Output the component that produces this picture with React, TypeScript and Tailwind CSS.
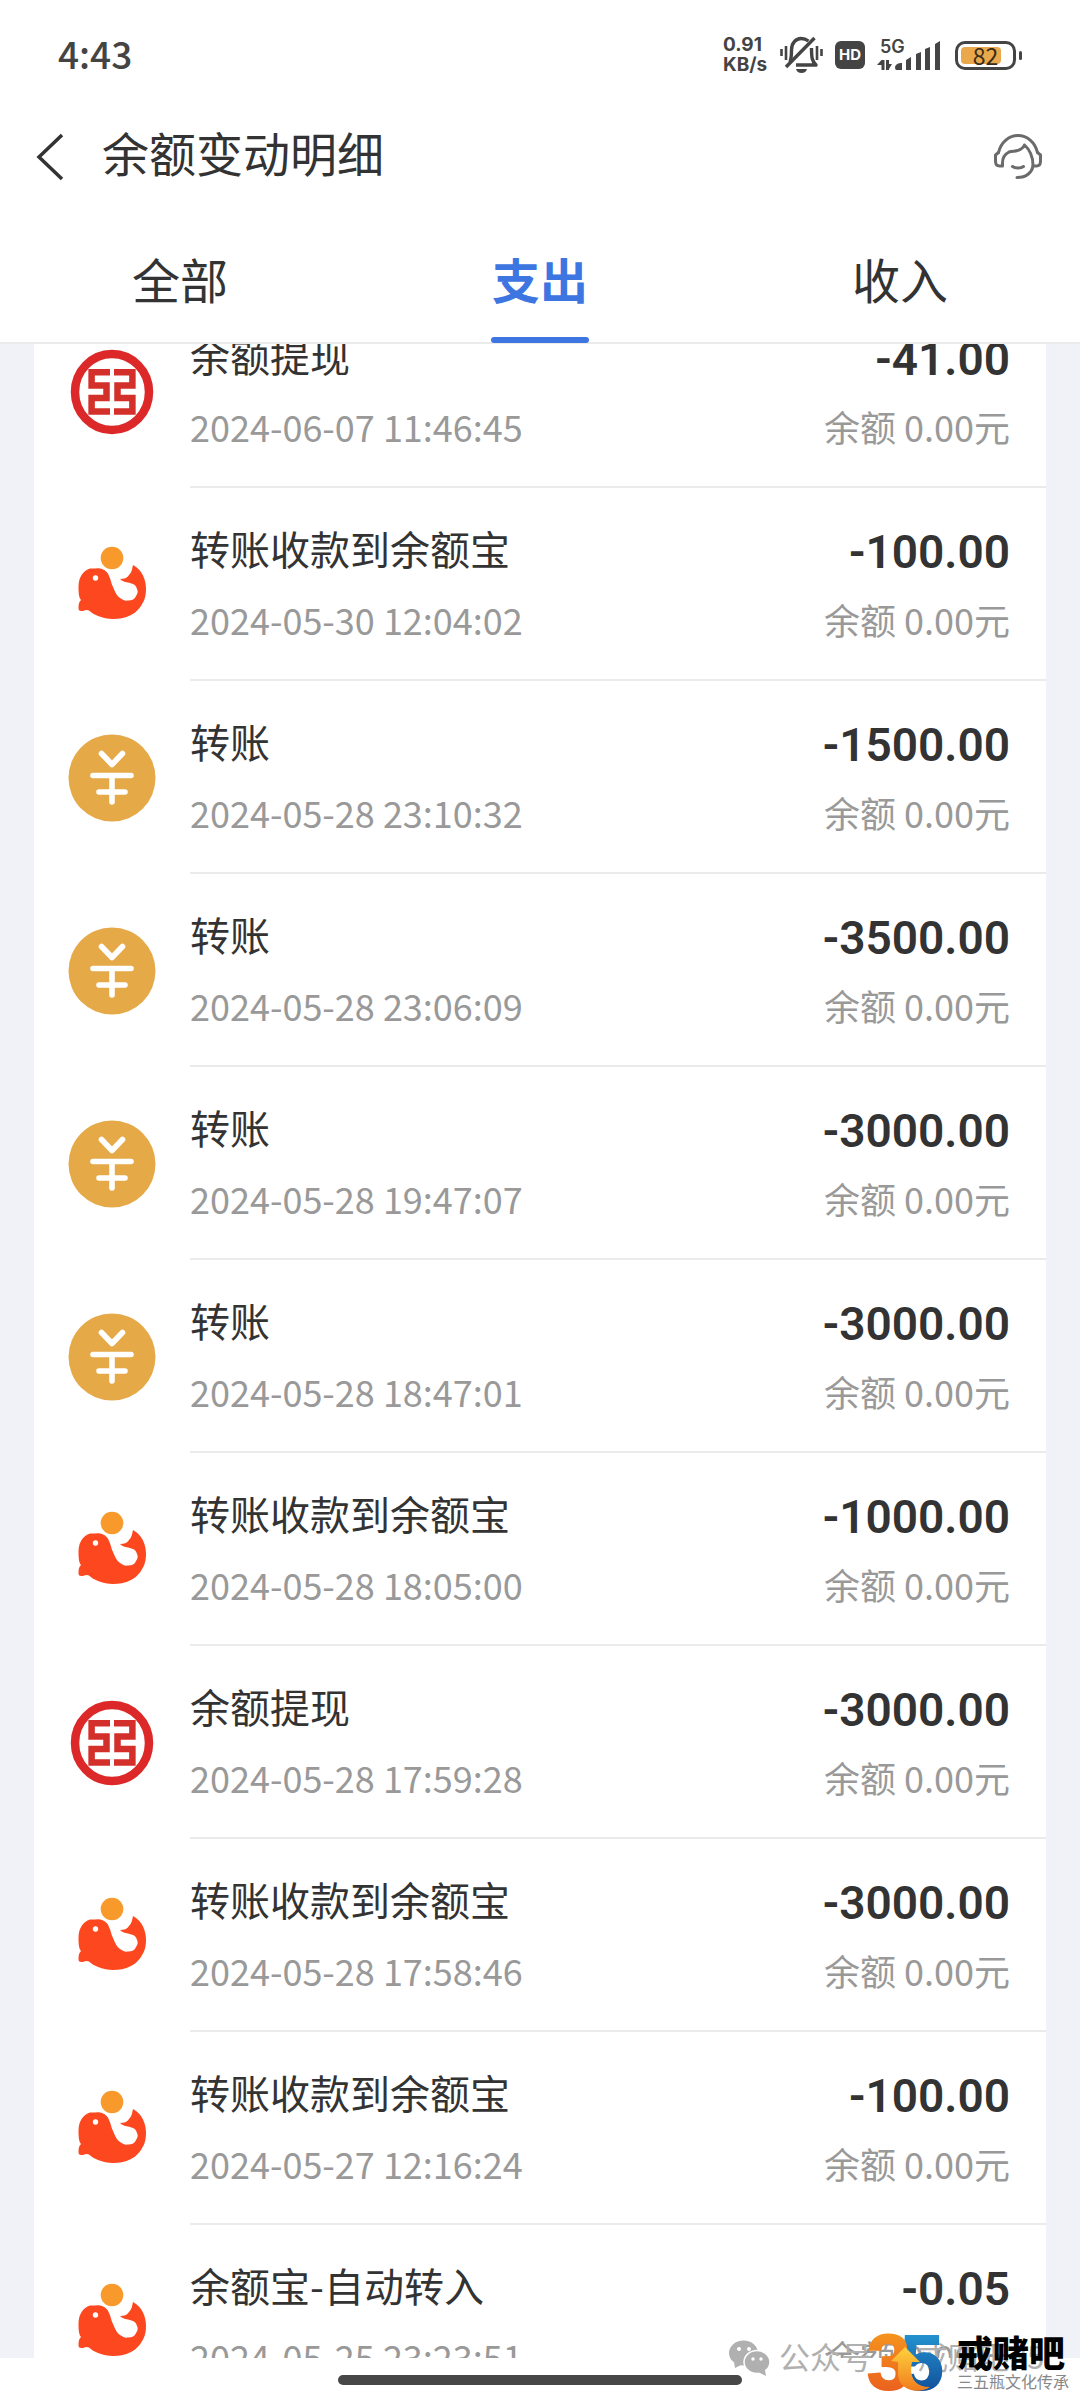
import type { ReactNode } from 'react'

type IconName = 'bank' | 'whale' | 'coin'

interface Entry {
  icon: IconName
  title: string
  time: string
  amount: string
}

const entries: Entry[] = [
  { icon: 'bank', title: '余额提现', time: '2024-06-07 11:46:45', amount: '-41.00' },
  { icon: 'whale', title: '转账收款到余额宝', time: '2024-05-30 12:04:02', amount: '-100.00' },
  { icon: 'coin', title: '转账', time: '2024-05-28 23:10:32', amount: '-1500.00' },
  { icon: 'coin', title: '转账', time: '2024-05-28 23:06:09', amount: '-3500.00' },
  { icon: 'coin', title: '转账', time: '2024-05-28 19:47:07', amount: '-3000.00' },
  { icon: 'coin', title: '转账', time: '2024-05-28 18:47:01', amount: '-3000.00' },
  { icon: 'whale', title: '转账收款到余额宝', time: '2024-05-28 18:05:00', amount: '-1000.00' },
  { icon: 'bank', title: '余额提现', time: '2024-05-28 17:59:28', amount: '-3000.00' },
  { icon: 'whale', title: '转账收款到余额宝', time: '2024-05-28 17:58:46', amount: '-3000.00' },
  { icon: 'whale', title: '转账收款到余额宝', time: '2024-05-27 12:16:24', amount: '-100.00' },
  { icon: 'whale', title: '余额宝-自动转入', time: '2024-05-25 23:23:51', amount: '-0.05' },
]

const tabs = ['全部', '支出', '收入']

function BankIcon() {
  return (
    <svg viewBox="0 0 88 88" className="size-22" aria-hidden="true">
      <ellipse cx="44" cy="44" rx="37" ry="38" fill="none" stroke="#dc2828" strokeWidth="8.5" />
      <g fill="none" stroke="#d3302b" strokeWidth="6.5">
        <path d="M42 24.3H23.6V37.5H38.5V50H23.6V63.5H42" />
        <path d="M46 24.3H64.4V37.5H49.5V50H64.4V63.5H46" />
      </g>
    </svg>
  )
}

function WhaleIcon() {
  return (
    <svg viewBox="0 0 88 88" className="size-22" aria-hidden="true">
      <circle cx="44" cy="17" r="11.3" fill="#f8992b" />
      <path
        d="M22 27.5C26 28 31 26.5 34 28C38 29.5 40 32 41 35C43 39 43 42 45 46C47 51 49 55 52 57C55 59 57 60 60 59.5C64 59.5 67 58 68 55C70 52 70 50 69 48C68 45 67 44 65 43C61 41 56 42 52 38C56 38 59 37 61 34C64 31 64 28 65 24C70 27 73 30 75 34.5C77 39 78 43 78 48C78 52 77.500 56 76 59.5C73 66 69 71 63 74C57 77 51 78 45 78C40 78 35 77 30 75C26 73.500 24 72 21 69.500C18 68 16 70 13.500 70C11 70 10.500 69 10.500 67C10.500 63 11 61 13 59C11 57 10.500 52 10.500 46C10.500 36 15 30 22 27.5Z"
        fill="#fd481f"
      />
      <circle cx="27.5" cy="37" r="2.7" fill="#fff" />
    </svg>
  )
}

function CoinIcon() {
  return (
    <svg viewBox="0 0 88 88" className="size-22" aria-hidden="true">
      <circle cx="44" cy="44" r="43.5" fill="#e6a947" />
      <g fill="none" stroke="#fff" strokeWidth="5.6" strokeLinecap="round" strokeLinejoin="round">
        <path d="M33.5 19.5L44 30.5L54.5 19.5" />
        <path d="M25 41.5H63M31 58H57M44 42V68" />
      </g>
    </svg>
  )
}

const icons: Record<IconName, ReactNode> = {
  bank: <BankIcon />,
  whale: <WhaleIcon />,
  coin: <CoinIcon />,
}

function MutedBell() {
  return (
    <svg viewBox="0 0 44 38" className="h-[38px] w-11" fill="none" stroke="#454545" strokeWidth="3.4" aria-hidden="true">
      <path d="M11 26C12.5 22 12.5 19 12.5 14C12.5 7 17 2.5 22 2.5C25 2.5 27.5 3.5 29.5 5" />
      <path d="M32.5 12C32.5 22 33 25 37 29H17" strokeLinejoin="round" />
      <path d="M35.5 2L7 31" />
      <path d="M17 33H28C27 36 25 37 22.5 37C20 37 18 36 17 33Z" fill="#454545" stroke="none" />
      <path d="M2.5 13V20M7 10V24M38 10V24M42.5 13V20" strokeWidth="2.6" />
    </svg>
  )
}

function Signal() {
  return (
    <svg viewBox="0 0 64 32" className="h-8 w-16" fill="#454545" aria-hidden="true">
      <path d="M18 28C19 25 21 24 25 24V31H19Q18 31 18 28Z" />
      <path d="M29 21L34 18V31H29ZM39 15L44 13V31H39ZM48 10L53 8V31H48ZM58 5L63 2V31H58Z" />
      <path d="M4.5 21V31H7.5V21ZM4.5 21L0 26H4.5ZM9 21V31H12V21ZM12 30L15 25H12Z" />
    </svg>
  )
}

function Headset() {
  return (
    <svg
      viewBox="0 0 48 46"
      className="h-[46px] w-12"
      fill="none"
      stroke="#6b6b6b"
      strokeWidth="3"
      strokeLinecap="round"
      strokeLinejoin="round"
      aria-hidden="true"
    >
      <path d="M4.5 18.5C7 8 15 1.5 24 1.5S41 8 43.5 18.5" />
      <path d="M4.5 18.5L1.5 21V27C1.5 30 3 32 5.5 32H8.5V29C8.5 24 11 20 15 18C19 16.5 23 18 27 15C29 14 30 12.5 30.5 11C35 15 39 22 39 31.5" />
      <path d="M43.5 18.5L46.5 21V27C46.5 30 45 32 42.5 32H39C38 38 33 43.5 23 43.5" />
      <path d="M18.5 32.5C21 34.5 27 34.5 29.5 32.5" />
    </svg>
  )
}

function StatusBar() {
  return (
    <div className="flex h-[110px] items-center justify-between px-[58px] text-[#444]">
      <span className="pb-1 text-[37px] leading-none font-medium">4:43</span>
      <div className="flex items-center">
        <div className="mr-2 w-[48px] font-['Inter',sans-serif] text-[19px] leading-5 font-bold">
          <p>0.91</p>
          <p>KB/s</p>
        </div>
        <MutedBell />
        <span className="mx-3 flex h-7 w-[30px] items-center justify-center rounded-md bg-[#444] font-['Inter',sans-serif] text-[15px] font-bold text-white">
          HD
        </span>
        <div className="relative mr-[14px]">
          <Signal />
          <span className="absolute top-0 left-[3px] font-['Inter',sans-serif] text-[18px] leading-4 font-semibold">
            5G
          </span>
        </div>
        <div className="flex items-center gap-[3px]">
          <div className="relative flex h-[29px] w-[61px] items-center justify-center rounded-[10px] border-3 border-[#444]">
            <div className="absolute top-[3px] bottom-[3px] left-[3px] w-10 rounded-sm bg-[#eaa84c]" />
            <span className="relative text-[23px] leading-none text-[#3a2c18]">82</span>
          </div>
          <div className="h-[9px] w-[3px] rounded-sm bg-[#444]" />
        </div>
      </div>
    </div>
  )
}

function Row({ entry }: { entry: Entry }) {
  return (
    <li className="flex h-[193px] gap-[34px] pl-[34px]">
      <div className="flex items-center">{icons[entry.icon]}</div>
      <div className="flex flex-1 justify-between border-b-2 border-[#ebebeb] pt-[30px] pr-9">
        <div>
          <p className="text-[40px] leading-[60px]">{entry.title}</p>
          <time className="mt-[11px] block text-[36px] leading-[60px] text-[#999]">{entry.time}</time>
        </div>
        <div className="text-right">
          <p className="pt-1 font-['Roboto',sans-serif] text-[46px] leading-[60px] font-semibold">{entry.amount}</p>
          <p className="mt-[7px] text-[36px] leading-[60px] text-[#999]">余额 0.00元</p>
        </div>
      </div>
    </li>
  )
}

function Logo35() {
  return (
    <svg viewBox="0 0 78 60" className="h-[60px] w-[78px]" aria-hidden="true">
      <defs>
        <linearGradient id="three" x1="0" y1="0" x2="0" y2="1">
          <stop offset="0" stopColor="#f8a01c" />
          <stop offset="1" stopColor="#e8541f" />
        </linearGradient>
        <linearGradient id="five" x1="0" y1="0" x2="0" y2="1">
          <stop offset="0" stopColor="#2aa5de" />
          <stop offset="1" stopColor="#0c3f8d" />
        </linearGradient>
        <linearGradient id="arrow" x1="0" y1="0" x2="0" y2="1">
          <stop offset="0" stopColor="#ffd23c" />
          <stop offset="1" stopColor="#f07c1e" />
        </linearGradient>
      </defs>
      <g fontFamily="Liberation Sans, sans-serif" fontWeight="700" fontSize="78" strokeWidth="2">
        <text x="34" y="56" fill="url(#five)" stroke="url(#five)">
          5
        </text>
        <text x="1" y="56" fill="url(#three)" stroke="url(#three)">
          3
        </text>
      </g>
      <path
        d="M39 14L54 29L46 29C43 42 47 54 64 54C52 62 33 57 32 42V29L25 28Z"
        fill="url(#arrow)"
      />
    </svg>
  )
}

function Watermark() {
  return (
    <div className="absolute right-0 bottom-0 h-[68px] w-[351px]">
      <div className="flex items-start gap-2 text-[#b0b0b0]">
        <svg viewBox="0 0 42 40" className="mt-[7px] h-10 w-[42px]" fill="currentColor" aria-hidden="true">
          <ellipse cx="14.5" cy="13" rx="14.5" ry="12.5" />
          <path d="M5 22L6 28L14 24Z" />
          <ellipse cx="28" cy="22" rx="13" ry="11.5" stroke="#fff" strokeWidth="1.5" />
          <path d="M36 30L37 36L29 32Z" />
          <g fill="#fff">
            <circle cx="10" cy="9" r="2" />
            <circle cx="20" cy="9" r="2" />
            <circle cx="24" cy="19" r="1.7" />
            <circle cx="32" cy="19" r="1.7" />
          </g>
        </svg>
        <span className="text-[31px] leading-[46px] whitespace-nowrap">公众号 · 戒赌吧35</span>
      </div>
      <div className="absolute top-0 right-[11px] flex gap-[13px]">
        <Logo35 />
        <div className="whitespace-nowrap">
          <p className="text-[36px] leading-9 font-black text-black">戒赌吧</p>
          <p className="mt-[2px] text-[16px] leading-5 text-[#888]">三五瓶文化传承</p>
        </div>
      </div>
    </div>
  )
}

export default function App() {
  return (
    <div className="relative flex h-screen flex-col overflow-hidden bg-white font-['Noto_Sans_CJK_SC',sans-serif] text-[#333]">
      <StatusBar />
      <header className="flex h-[94px] items-center pr-[38px] pl-9">
        <button type="button" aria-label="返回" className="mr-[38px]">
          <svg viewBox="0 0 28 48" className="h-12 w-7" fill="none" stroke="#333" strokeWidth="3.5" aria-hidden="true">
            <path d="M26 2L3 24L26 46" />
          </svg>
        </button>
        <h1 className="flex-1 pb-[10px] text-[47px] leading-[70px]">余额变动明细</h1>
        <button type="button" aria-label="客服">
          <Headset />
        </button>
      </header>
      <nav className="grid h-[140px] grid-cols-3 border-b-2 border-[#ebebeb]" role="tablist">
        {tabs.map((tab) => (
          <button
            key={tab}
            type="button"
            role="tab"
            aria-selected={tab === '支出'}
            className="relative pt-6 pb-[14px] text-[48px] leading-[70px] aria-selected:font-bold aria-selected:text-[#3d76e0]"
          >
            {tab}
            {tab === '支出' && (
              <span className="absolute -bottom-px left-1/2 h-[6px] w-[98px] -translate-x-1/2 rounded-full bg-[#3d76e0]" />
            )}
          </button>
        ))}
      </nav>
      <main className="min-h-0 flex-1 overflow-hidden bg-[#f0f2f7] px-[34px]">
        {/* list is scrolled a little past the first row's top */}
        <ul className="-mt-[49px] bg-white">
          {entries.map((entry) => (
            <Row key={entry.time} entry={entry} />
          ))}
        </ul>
      </main>
      <footer className="flex h-[43px] justify-center pt-[17px]">
        <div className="h-[10px] w-[404px] rounded-full bg-[#474747]" />
      </footer>
      <Watermark />
    </div>
  )
}
